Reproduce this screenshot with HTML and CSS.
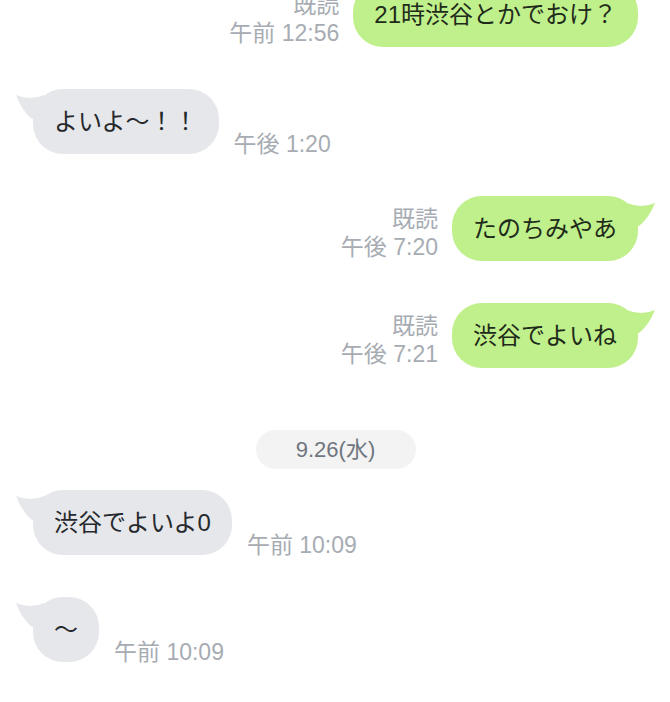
FILE: index.html
```html
<!DOCTYPE html>
<html lang="ja">
<head>
    <meta charset="UTF-8">
    <meta name="viewport" content="width=device-width, initial-scale=1.0">
    <title>トーク</title>
    <link rel="stylesheet" href="styles.css">
</head>
<body>

<div class="chat">

    <!-- 自分のメッセージ -->
    <div class="row mine first">
        <div class="meta">
            <div>既読</div>
            <div>午前 12:56</div>
        </div>
        <div class="bubble green">21時渋谷とかでおけ？</div>
    </div>

    <!-- 相手のメッセージ -->
    <div class="row theirs">
        <div class="bubble gray">
            <svg class="tail" width="40" height="32" viewBox="0 0 40 32"><path d="M0 6 Q14 12 28 6 L40 20 L16 30 Q6 22 0 6 Z"/></svg>
            <span>よいよ〜！！</span>
        </div>
        <div class="time">午後 1:20</div>
    </div>

    <div class="row mine">
        <div class="meta">
            <div>既読</div>
            <div>午後 7:20</div>
        </div>
        <div class="bubble green">
            <svg class="tail" width="40" height="32" viewBox="0 0 40 32"><path d="M40 7 Q26 13 12 7 L0 20 L24 30 Q34 22 40 7 Z"/></svg>
            <span>たのちみやあ</span>
        </div>
    </div>

    <div class="row mine">
        <div class="meta">
            <div>既読</div>
            <div>午後 7:21</div>
        </div>
        <div class="bubble green">
            <svg class="tail" width="40" height="32" viewBox="0 0 40 32"><path d="M40 7 Q26 13 12 7 L0 20 L24 30 Q34 22 40 7 Z"/></svg>
            <span>渋谷でよいね</span>
        </div>
    </div>

    <!-- 日付 -->
    <div class="date">9.26(水)</div>

    <div class="row theirs">
        <div class="bubble gray">
            <svg class="tail" width="40" height="32" viewBox="0 0 40 32"><path d="M0 6 Q14 12 28 6 L40 20 L16 30 Q6 22 0 6 Z"/></svg>
            <span>渋谷でよいよ0</span>
        </div>
        <div class="time">午前 10:09</div>
    </div>

    <div class="row theirs">
        <div class="bubble gray">
            <svg class="tail" width="40" height="32" viewBox="0 0 40 32"><path d="M0 6 Q14 12 28 6 L40 20 L16 30 Q6 22 0 6 Z"/></svg>
            <span>〜</span>
        </div>
        <div class="time">午前 10:09</div>
    </div>

</div>

</body>
</html>
```

FILE: styles.css
```css
body {
    margin: 0;
    background-color: #fff;
    font-family: "Liberation Sans", "Noto Sans CJK JP", sans-serif;
    overflow: hidden;
}
.chat {
    display: flex;
    flex-direction: column;
    padding: 0 32px 0 33px;
}
.row {
    display: flex;
    align-items: flex-end;
    margin-bottom: 42px;
}
.row.first {
    margin-top: -18px;
}
.mine {
    justify-content: flex-end;
}
.bubble {
    position: relative;
    z-index: 0;
    font-size: 24px;
    line-height: 33px;
    padding: 16px 21px;
    border-radius: 30px;
    white-space: nowrap;
}
.bubble span {
    position: relative;
}
.green {
    background-color: #c0f08b;
    color: #1f2b1a;
}
.gray {
    background-color: #e5e7ea;
    color: #25282c;
}
.tail {
    position: absolute;
    top: 0;
    z-index: -1;
}
.gray .tail {
    left: -17px;
    fill: #e5e7ea;
}
.green .tail {
    right: -17px;
    fill: #c0f08b;
}
.meta {
    text-align: right;
    margin-right: 14px;
    font-size: 23px;
    line-height: 28px;
    color: #a7acb3;
}
.time {
    margin-left: 15px;
    font-size: 23px;
    line-height: 20px;
    color: #a7acb3;
}
.date {
    align-self: center;
    width: 160px;
    height: 39px;
    line-height: 40px;
    text-align: center;
    border-radius: 20px;
    background-color: #f3f3f4;
    color: #6f7680;
    font-size: 22px;
    margin-top: 20px;
    margin-bottom: 21px;
}
```
